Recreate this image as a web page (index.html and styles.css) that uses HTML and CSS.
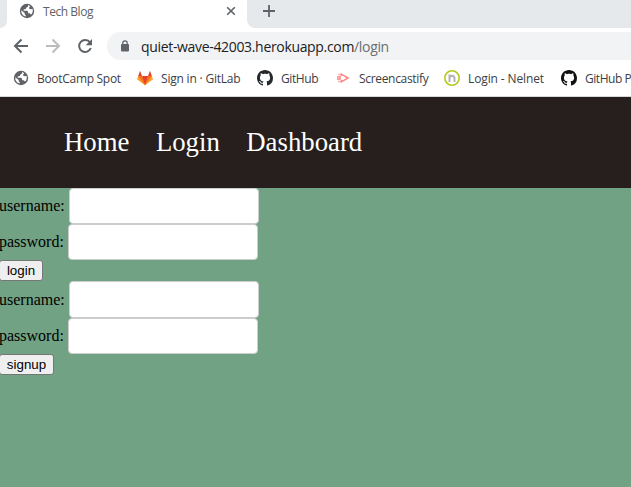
FILE: index.html
```html
<!DOCTYPE html>
<html lang="en">
<head>
<meta charset="utf-8">
<title>Tech Blog</title>
<link rel="stylesheet" href="styles.css">
</head>
<body>
<svg class="defs" width="0" height="0">
  <symbol id="globe" viewBox="0 0 16 16">
    <circle cx="8" cy="8" r="7.2" fill="#5f6368"/>
    <path fill="#fff" d="M9.2 2 8.8 3.700 7.500 4.400 6.700 6 4.600 6.400 4.700 7.700H8l1.100 1.100v1.400h1.700l.8 1 .9.100c1.300-1.600 1.600-3.800 1-5.600l-1.100.6-1.800-.2-.6-1.300 1.200-1.600ZM2.200 7.200c-.2 3.100 1.400 5.400 4.500 6.400v-1.300l-1-1V9.900Z"/>
  </symbol>
  <symbol id="github" viewBox="0 0 16 16">
    <path d="M8 0C3.58 0 0 3.58 0 8c0 3.54 2.29 6.53 5.47 7.59.4.07.55-.17.55-.38 0-.19-.01-.82-.01-1.49-2.01.37-2.53-.49-2.69-.94-.09-.23-.48-.94-.82-1.13-.28-.15-.68-.52-.01-.53.63-.01 1.08.58 1.23.82.72 1.21 1.87.87 2.33.66.07-.52.28-.87.51-1.07-1.78-.2-3.64-.89-3.64-3.95 0-.87.31-1.59.82-2.15-.08-.2-.36-1.02.08-2.12 0 0 .67-.21 2.2.82.64-.18 1.32-.27 2-.27s1.36.09 2 .27c1.53-1.04 2.2-.82 2.2-.82.44 1.1.16 1.92.08 2.12.51.56.82 1.27.82 2.15 0 3.07-1.87 3.75-3.65 3.95.29.25.54.73.54 1.48 0 1.07-.01 1.93-.01 2.2 0 .21.15.46.55.38A8.01 8.01 0 0 0 16 8c0-4.42-3.58-8-8-8Z"/>
  </symbol>
</svg>
<div class="tabs">
  <div class="tab-before"></div>
  <div class="tab">
    <svg class="tab-icon" width="16" height="16"><use href="#globe"/></svg>
    <span class="tab-title">Tech Blog</span>
    <svg class="close" width="10" height="10" viewBox="0 0 10 10"><path d="m1.2 1.2 7.6 7.6m0-7.6L1.2 8.8" stroke="#5f6368" stroke-width="1.6"/></svg>
  </div>
  <div class="tab-after">
    <svg width="12" height="12" viewBox="0 0 12 12"><path d="M6 0v12M0 6h12" stroke="#5f6368" stroke-width="1.8"/></svg>
  </div>
</div>
<div class="toolbar">
  <svg class="arrow" width="16" height="16" viewBox="0 0 16 16" fill="none" stroke="#5f6368" stroke-width="2"><path d="M15 8H2.500M8.500 1.500 2 8l6.500 6.500"/></svg>
  <svg class="arrow" width="16" height="16" viewBox="0 0 16 16" fill="none" stroke="#babcbe" stroke-width="2"><path d="M1 8h12.500M7.500 1.500 14 8l-6.500 6.500"/></svg>
  <svg class="reload" width="16" height="16" viewBox="0 0 16 16"><path d="M13 4.400A6 6 0 1 0 13.800 10" fill="none" stroke="#5f6368" stroke-width="2"/><path d="M15 1v6.300H8.700Z" fill="#5f6368"/></svg>
  <div class="address">
    <svg width="8" height="12" viewBox="0 0 8 12"><rect y="4" width="8" height="7.500" rx="1" fill="#5f6368"/><path d="M1.800 5V3a2.200 2.200 0 0 1 4.400 0v2" fill="none" stroke="#5f6368" stroke-width="1.200"/></svg>
    <span class="url">quiet-wave-42003.herokuapp.com<span class="path">/login</span></span>
  </div>
</div>
<div class="bookmarks">
  <div class="mark mark-spot"><svg width="16" height="16"><use href="#globe"/></svg><span>BootCamp Spot</span></div>
  <div class="mark mark-gitlab"><svg width="16" height="16" viewBox="0 0 16 16"><path fill="#fca326" d="M1.200 6 0 9.200l8 6 8-6L14.800 6Z"/><path fill="#fc6d26" d="M1.200 6H5l3 9.200Zm13.600 0H11l-3 9.200Z"/><path fill="#e24329" d="M3 .8 1.200 6H5Zm10 0L14.800 6H11ZM5 6h6l-3 9.200Z"/></svg><span>Sign in · GitLab</span></div>
  <div class="mark mark-github"><svg width="16" height="16" fill="#24292e"><use href="#github"/></svg><span>GitHub</span></div>
  <div class="mark mark-screen"><svg width="16" height="16" viewBox="0 0 16 16" fill="none" stroke="#ff8280"><path d="M6.500 6V4.200L13 8l-6.500 3.800V10" stroke-width="1.500"/><path d="M2 8h4" stroke-width="4" stroke-opacity=".75"/><path d="M3 4.500h3M3 11.500h3" stroke-width="1.500" stroke-opacity=".6"/></svg><span>Screencastify</span></div>
  <div class="mark mark-nelnet"><svg width="16" height="16" viewBox="0 0 16 16" fill="none"><circle cx="8" cy="8" r="7.200" stroke="#b5c91d" stroke-width="1.600"/><path d="M5.500 12V4.500m0 4c0-3.700 5-3.700 5 0V12" stroke="#b4b2b5" stroke-width="2"/></svg><span>Login - Nelnet</span></div>
  <div class="mark mark-last"><svg width="16" height="16" fill="#111"><use href="#github"/></svg><span>GitHub P</span></div>
</div>
<nav class="nav">
  <a>Home</a><a>Login</a><a>Dashboard</a>
</nav>
<main>
  <form>
    <label class="field field-user">username: <input type="text"></label>
    <label class="field field-pass">password: <input type="password"></label>
    <button type="button" class="login">login</button>
  </form>
  <form class="second">
    <label class="field field-user">username: <input type="text"></label>
    <label class="field field-pass">password: <input type="password"></label>
    <button type="button" class="signup">signup</button>
  </form>
</main>
</body>
</html>
```
FILE: styles.css
```css
* { box-sizing: border-box; }
body {
  margin: 0;
  height: 487px;
  overflow: hidden;
  background: #71a284;
  font-family: "Liberation Serif", serif;
  font-size: 16px;
}
.defs { display: block; }
svg { flex: none; }
.tabs, .toolbar, .bookmarks {
  display: flex;
  background: #fff;
  font-family: "Open Sans", "Noto Sans", sans-serif;
  white-space: nowrap;
}
.tabs { height: 28px; }
.tab-before { width: 7px; background: #e5e9ec; border-bottom-right-radius: 7px; }
.tab {
  display: flex;
  align-items: center;
  width: 240px;
  height: 22px;
  padding: 0 11px 0 12px;
  font-size: 12px;
  color: #5f6368;
}
.tab-title { margin-left: 8px; letter-spacing: -0.45px; }
.close { margin-left: auto; }
.tab-after { flex: 1; padding: 5px 16px; background: #e5e9ec; border-bottom-left-radius: 8px; }
.tab-after svg { display: block; }
.toolbar { height: 34px; align-items: center; padding-left: 13px; padding-top: 2px; }
.arrow { margin-right: 16px; }
.address {
  display: flex;
  align-items: center;
  flex: 1;
  height: 28px;
  margin-left: 14px;
  padding-left: 14px;
  border-radius: 14px 0 0 14px;
  background: #f1f3f4;
  font-size: 14px;
  color: #202124;
}
.url { margin-left: 12px; letter-spacing: -0.33px; }
.path { color: #6b6f73; }
.bookmarks {
  height: 35px;
  padding-left: 13px;
  align-items: center;
  border-bottom: 1px solid #d5d7d9;
  padding-bottom: 2px;
  font-size: 12px;
  color: #3c4043;
}
.mark { display: flex; align-items: center; gap: 8px; flex: none; }
.mark-spot { width: 124px; letter-spacing: -0.3px; }
.mark-gitlab { width: 120px; letter-spacing: -0.2px; }
.mark-github { width: 78px; letter-spacing: -0.4px; }
.mark-screen { width: 109px; letter-spacing: -0.32px; }
.mark-nelnet { width: 117px; letter-spacing: -0.12px; }
.mark-last { letter-spacing: -0.45px; }
.nav {
  display: flex;
  align-items: center;
  gap: 26.500px;
  height: 91px;
  padding-left: 64px;
  background: #271f1d;
  color: #fff;
  font-size: 26.750px;
}
form { display: flex; flex-direction: column; align-items: flex-start; }
.field { display: flex; align-items: center; height: 36px; margin-left: -1px; white-space: pre; }
.second .field-user { height: 37px; }
input {
  width: 190px;
  height: 100%;
  padding: 0;
  border: 1px solid #ccc;
  border-radius: 4px;
  background: #fff;
}
button {
  height: 21px;
  margin-left: -1px;
  padding: 0;
  border: 1px solid #767676;
  border-radius: 3px;
  background: #efefef;
  color: #000;
  font: 13.333px "Liberation Sans", sans-serif;
}
.login { width: 44px; }
.signup { width: 55px; }
```
